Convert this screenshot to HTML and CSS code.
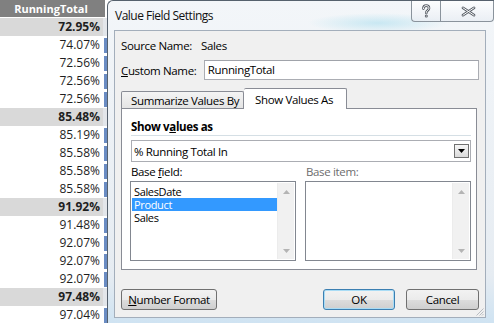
FILE: index.html
```html
<!DOCTYPE html>
<html>
    <head>
        <meta charset="utf-8">
        <title>Value Field Settings</title>
        <link rel="stylesheet" href="styles.css">
    </head>
    <body>
        <div class="sheet">
            <div class="hdr">RunningTotal</div>
            <div class="row sub"><span class="v">72.95%</span><span class="edge"></span></div>
            <div class="row"><span class="v">74.07%</span><span class="edge"></span></div>
            <div class="row"><span class="v">72.56%</span><span class="edge"></span></div>
            <div class="row"><span class="v">72.56%</span><span class="edge"></span></div>
            <div class="row"><span class="v">72.56%</span><span class="edge"></span></div>
            <div class="row sub"><span class="v">85.48%</span><span class="edge"></span></div>
            <div class="row"><span class="v">85.19%</span><span class="edge"></span></div>
            <div class="row"><span class="v">85.58%</span><span class="edge"></span></div>
            <div class="row"><span class="v">85.58%</span><span class="edge"></span></div>
            <div class="row"><span class="v">85.58%</span><span class="edge"></span></div>
            <div class="row sub"><span class="v">91.92%</span><span class="edge"></span></div>
            <div class="row"><span class="v">91.48%</span><span class="edge"></span></div>
            <div class="row"><span class="v">92.07%</span><span class="edge"></span></div>
            <div class="row"><span class="v">92.07%</span><span class="edge"></span></div>
            <div class="row"><span class="v">92.07%</span><span class="edge"></span></div>
            <div class="row sub"><span class="v">97.48%</span><span class="edge"></span></div>
            <div class="row"><span class="v">97.04%</span><span class="edge"></span></div>
        </div>

        <div class="dialog">
            <div class="titlebar">
                <span class="title">Value Field Settings</span>
                <div class="caps">
                    <span class="cap help">
                        <svg width="12" height="15" viewBox="0 0 12 15">
                            <path d="M3.4 4.6 C3.4 2.5 4.7 1.6 6.2 1.6 C7.9 1.6 9 2.7 9 4.2 C9 6.3 6.3 6.5 6.3 8.5 V9" fill="none" stroke="#585e66" stroke-width="2.6" stroke-linecap="round"/>
                            <path d="M3.4 4.6 C3.4 2.5 4.7 1.6 6.2 1.6 C7.9 1.6 9 2.7 9 4.2 C9 6.3 6.3 6.5 6.3 8.5 V9" fill="none" stroke="#fff" stroke-width="1" stroke-linecap="round"/>
                            <circle cx="6.3" cy="12" r="1.5" fill="#585e66"/>
                            <circle cx="6.3" cy="12" r="0.6" fill="#fff"/>
                        </svg>
                    </span>
                    <span class="cap close">
                        <svg width="15" height="11" viewBox="0 0 15 11">
                            <path d="M2 1.8 L13 9.2 M13 1.8 L2 9.2" stroke="#585e66" stroke-width="2.6" stroke-linecap="round"/>
                            <path d="M2 1.8 L13 9.2 M13 1.8 L2 9.2" stroke="#fff" stroke-width="1" stroke-linecap="round"/>
                        </svg>
                    </span>
                </div>
            </div>

            <div class="client">
                <div class="line src"><span class="lbl">Source Name:</span><span>Sales</span></div>
                <div class="line name"><span class="lbl wide"><u>C</u>ustom Name:</span><span class="field">RunningTotal</span></div>

                <div class="tabs">
                    <span class="tab">Summarize Values By</span>
                    <span class="tab on">Show Values As</span>
                </div>

                <div class="panel">
                    <div class="group">Show v<u>a</u>lues as</div>
                    <div class="rule"></div>
                    <div class="combo">
                        <span>% Running Total In</span>
                        <span class="drop"><svg width="7" height="4" viewBox="0 0 7 4"><polygon points="0,0 7,0 3.5,4" fill="#000"/></svg></span>
                    </div>
                    <div class="pair labels">
                        <span>Base <u>f</u>ield:</span>
                        <span class="off">Base item:</span>
                    </div>
                    <div class="pair lists">
                        <div class="list">
                            <div class="items">
                                <div class="item">SalesDate</div>
                                <div class="item sel">Product</div>
                                <div class="item">Sales</div>
                            </div>
                            <div class="scroll">
                                <svg width="7" height="4" viewBox="0 0 7 4"><polygon points="0,4 7,4 3.5,0" fill="#b4b4b4"/></svg>
                                <svg width="7" height="4" viewBox="0 0 7 4"><polygon points="0,0 7,0 3.5,4" fill="#b4b4b4"/></svg>
                            </div>
                        </div>
                        <div class="list">
                            <div class="items"></div>
                            <div class="scroll">
                                <svg width="7" height="4" viewBox="0 0 7 4"><polygon points="0,4 7,4 3.5,0" fill="#b4b4b4"/></svg>
                                <svg width="7" height="4" viewBox="0 0 7 4"><polygon points="0,0 7,0 3.5,4" fill="#b4b4b4"/></svg>
                            </div>
                        </div>
                    </div>
                </div>

                <div class="actions">
                    <span class="btn fmt"><u>N</u>umber Format</span>
                    <span class="btn ok">OK</span>
                    <span class="btn cancel">Cancel</span>
                </div>

                <svg class="grip" width="8" height="8" viewBox="0 0 8 8">
                    <path d="M7.5 0.5 L0.5 7.5 M7.5 3.5 L3.5 7.5 M7.5 6 L6 7.5" stroke="#b8bcc2" stroke-width="1"/>
                </svg>
            </div>
        </div>
    </body>
</html>
```

FILE: styles.css
```css
* {box-sizing: border-box;}
u {text-decoration: underline; text-underline-offset: 1px;}

body {
    margin: 0;
    width: 494px;
    height: 323px;
    overflow: hidden;
    display: flex;
    background-color: #fff;
    font-family: "Open Sans", sans-serif;
}

/* spreadsheet behind the dialog */
.sheet {width: 107px; flex: none;}

.hdr {
    width: 105px;
    height: 18px;
    padding-right: 3px;
    border-bottom: 1px solid #fff;
    background-color: #808080;
    color: #fff;
    font-size: 11px;
    font-weight: bold;
    line-height: 17px;
    text-align: center;
}

.row {display: flex; height: 18px;}

.v {
    width: 103px;
    padding-right: 3px;
    color: #1e1e1e;
    font-size: 12px;
    line-height: 18px;
    text-align: right;
}

.sub .v {background-color: #d9d9d9; font-weight: bold;}

.edge {
    width: 3px;
    margin: 2px 0 1px 1px;
    background-color: #6a8cc3;
}
.sub .edge {width: 4px; margin: 0; background-color: #e3e6ea;}

/* dialog */
.dialog {
    width: 387px;
    height: 323px;
    flex: none;
    display: flex;
    flex-direction: column;
    border: 1px solid #56616d;
    border-right: none;
    border-bottom: none;
    border-top-left-radius: 6px;
    background:
        radial-gradient(ellipse 70px 10px at 270px 22px, rgba(150, 215, 235, 0.45), transparent),
        linear-gradient(#f3f6f9, #e6ecf2 85%, #cfe3f2);
    color: #000;
    font-size: 11.5px;
    letter-spacing: -0.35px;
}

.titlebar {height: 29px; display: flex; align-items: flex-start;}

.title {
    padding: 7px 0 0 7px;
    font-size: 12px;
    line-height: 16px;
    letter-spacing: -0.5px;
    color: #111;
}

.caps {margin-left: auto; display: flex;}

.cap {
    height: 21px;
    display: flex;
    align-items: center;
    justify-content: center;
    border: 1px solid #8a939c;
    border-top: none;
    background: linear-gradient(rgba(255, 255, 255, 0.8), rgba(232, 237, 243, 0.8));
}
.help {width: 29px; border-right: none; border-bottom-left-radius: 4px;}
.close {width: 54px; padding-left: 2px; border-bottom-right-radius: 4px;}

.client {
    position: relative;
    width: 372px;
    height: 288px;
    margin-left: 6px;
    padding: 0 6px;
    border: 1px solid #a3aebb;
    background-color: #f0f0f0;
}

.line {display: flex; align-items: center;}
.src {height: 16px; margin-top: 6px;}
.name {height: 20px; margin-top: 7px;}
.lbl {width: 80px;}
.lbl.wide {width: 83px;}

.field {
    width: 276px;
    height: 20px;
    padding-left: 3px;
    border: 1px solid #abadb3;
    border-top-color: #a0a3aa;
    background-color: #fff;
    line-height: 18px;
}

.tabs {height: 20px; margin-top: 8px; display: flex; align-items: flex-end;}

.tab {
    width: 123px;
    height: 17px;
    padding: 1px 0 0 9px;
    border: 1px solid #898c95;
    border-bottom: none;
    border-radius: 2px 2px 0 0;
    background: linear-gradient(#f4f4f4, #e4e4e4);
    line-height: 15px;
}

.tab.on {
    position: relative;
    z-index: 1;
    width: 103px;
    height: 21px;
    margin-bottom: -1px;
    padding: 3px 0 0 11px;
    border-left: none;
    background: #fff;
}

.panel {
    width: 356px;
    height: 162px;
    padding-left: 8px;
    border: 1px solid #898c95;
    background-color: #fff;
}

.group {margin: 11px 0 0 1px; font-weight: bold; line-height: 14px;}

.rule {width: 340px; height: 1px; margin: 1px 0 0 1px; background-color: #d5dfe5;}

.combo {
    width: 340px;
    height: 22px;
    margin: 4px 0 0 1px;
    padding: 0 1px 0 2px;
    display: flex;
    align-items: center;
    justify-content: space-between;
    border: 1px solid #abadb3;
}

.drop {
    width: 15px;
    height: 14px;
    display: flex;
    align-items: center;
    justify-content: center;
    border: 1px solid #707070;
    background: linear-gradient(#f6f6f6, #dadada);
}

.pair {display: grid; grid-template-columns: 166px 166px; column-gap: 9px;}
.labels {margin-top: 3px; line-height: 14px;}
.labels span {padding-left: 1px;}
.off {color: #6d6d6d;}

.lists {height: 80px; margin-top: 2px;}

.list {
    display: flex;
    padding: 1px;
    border: 1px solid #828790;
    background-color: #fff;
}

.items {flex: 1; padding-top: 2px;}
.item {height: 13px; padding-left: 2px; font-size: 11px; line-height: 13px;}
.sel {background-color: #3399ff; color: #fff;}

.scroll {
    width: 17px;
    display: flex;
    flex-direction: column;
    align-items: center;
    justify-content: space-between;
    padding: 7px 0 6px;
    background-color: #f1f1f1;
    border-left: 1px solid #ececec;
}

.actions {height: 21px; margin-top: 19px; display: flex;}

.btn {
    height: 21px;
    display: flex;
    align-items: center;
    justify-content: center;
    border: 1px solid #707070;
    border-radius: 3px;
    background: linear-gradient(#f2f2f2 0%, #ebebeb 50%, #dddddd 51%, #cfcfcf 100%);
}
.fmt {width: 96px;}
.ok {
    width: 72px;
    margin-left: auto;
    border-color: #3c7fb1;
    box-shadow: inset 0 0 0 1px #a9dcf5;
}
.cancel {width: 73px; margin-left: 11px;}

.grip {position: absolute; right: 1px; bottom: 1px;}
```
